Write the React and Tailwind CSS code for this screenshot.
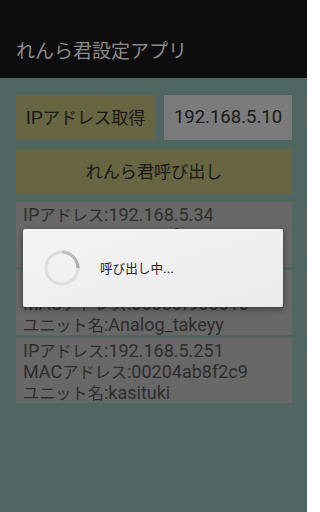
/**
 * App.jsx – れんら君設定アプリ (calling dialog shown over the device list)
 */

const DEVICES = [
  { ip: '192.168.5.34',  mac: '0000f9000018', unit: 'Analog_01' },
  { ip: '192.168.5.35',  mac: '00000f900010', unit: 'Analog_takeyy' },
  { ip: '192.168.5.251', mac: '00204ab8f2c9', unit: 'kasituki' },
];

// The device's CJK fallback font draws a little smaller than the Latin one,
// so CJK runs are set at 0.9em of the surrounding text.
function Jp({ children }) {
  const parts = children.split(/([\u3000-\u30ff\u4e00-\u9fff]+)/);
  return parts.map((p, i) =>
    i % 2 ? <span key={i} className="text-[0.9em]">{p}</span> : p
  );
}

function Spinner() {
  return (
    <svg width="36" height="36" viewBox="0 0 36 36" className="shrink-0">
      <defs>
        <linearGradient id="arc" x1="0" y1="0" x2="1" y2="1">
          <stop offset="0" stopColor="#c8c8c8" />
          <stop offset="1" stopColor="#a9a9a9" />
        </linearGradient>
      </defs>
      <circle cx="18" cy="18" r="16" fill="none" stroke="#dddddd" strokeWidth="3" />
      <path d="M18 2 A16 16 0 0 1 34 18" fill="none" stroke="url(#arc)" strokeWidth="3" />
    </svg>
  );
}

export default function App() {
  return (
    <div className="relative flex flex-col w-[307px] h-[512px] overflow-hidden bg-[#4f6663]
                    font-[Roboto,'Noto_Sans_CJK_JP',sans-serif]">

      {/* ── Action bar ─────────────────────────────────────────── */}
      <header className="flex items-center h-[78px] pt-[24px] px-4 bg-[#0d0d0d] shrink-0">
        <span className="text-[19px] text-[#8a8a8a] leading-none">れんら君設定アプリ</span>
      </header>

      {/* ── Controls ───────────────────────────────────────────── */}
      <div className="flex flex-col gap-[9px] pt-[17px] pl-4 pr-[15px]">
        <div className="flex gap-[9px] h-[45px]">
          <button className="w-[139px] bg-[#676542] text-[#1a1a1a] text-[19px] leading-none">
            <Jp>IPアドレス取得</Jp>
          </button>
          <div className="flex-1 flex items-center justify-center bg-[#7b7b7b] text-[#1a1a1a] text-[18.5px]">
            192.168.5.10
          </div>
        </div>
        <button className="h-[45px] bg-[#676542] text-[#1a1a1a] text-[19px] leading-none">
          <Jp>れんら君呼び出し</Jp>
        </button>
      </div>

      {/* ── Device list ────────────────────────────────────────── */}
      <ul className="flex flex-col gap-[3px] mt-2 pl-4 pr-[15px]">
        {DEVICES.map(d => (
          <li key={d.ip}
              className="h-[65px] pt-[3px] px-[7px] bg-[#686868] text-[#2e2e2e] text-[18px] leading-[20px] whitespace-nowrap">
            <div><Jp>{`IPアドレス:${d.ip}`}</Jp></div>
            <div><Jp>{`MACアドレス:${d.mac}`}</Jp></div>
            <div><Jp>{`ユニット名:${d.unit}`}</Jp></div>
          </li>
        ))}
      </ul>

      {/* ── Progress dialog ────────────────────────────────────── */}
      <div className="absolute left-[23px] top-[229px] w-[260px] h-[78px] flex items-center gap-[20px] pl-[21px]
                      bg-gradient-to-br from-[#f4f4f4] to-[#ebebeb] rounded-[2px]
                      shadow-[0_2px_6px_rgba(0,0,0,0.45)]">
        <Spinner />
        <span className="text-[14px] text-[#222]"><Jp>呼び出し中...</Jp></span>
      </div>
    </div>
  );
}
